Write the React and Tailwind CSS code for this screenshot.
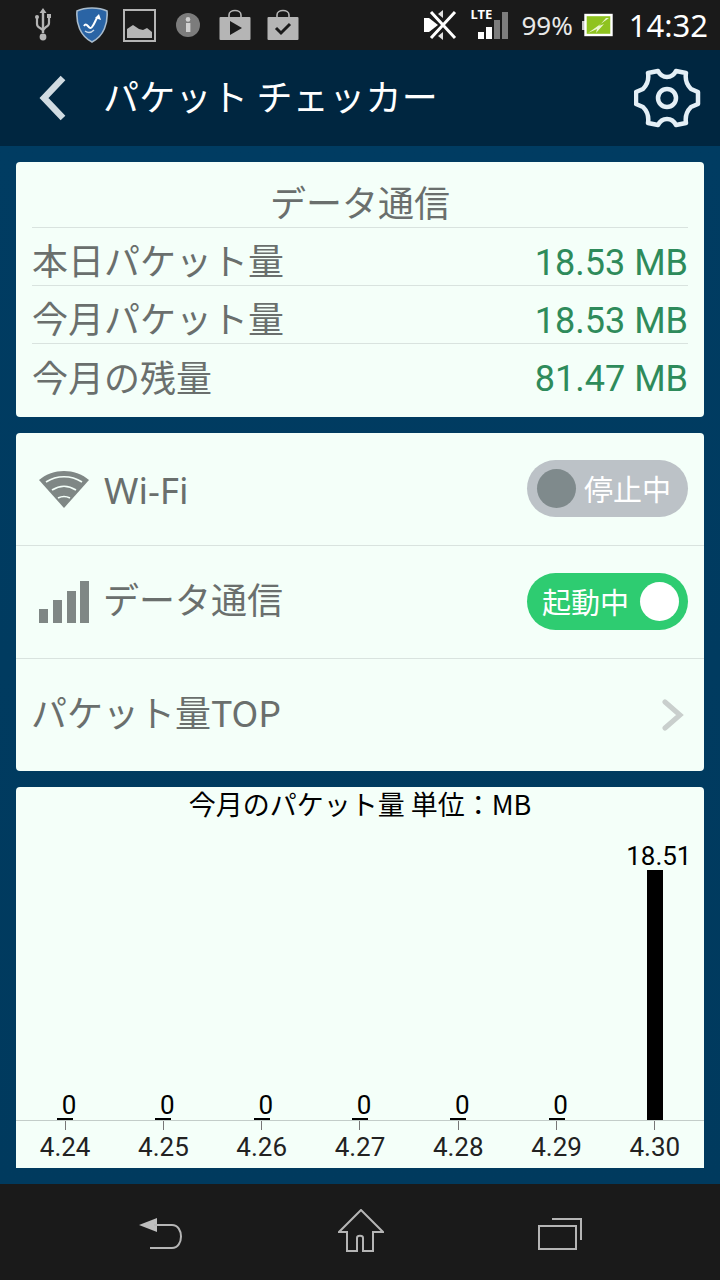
import React from "react";

const jp = { fontFamily: '"Noto Sans CJK JP", sans-serif' };
const noto = { fontFamily: '"Noto Sans", sans-serif' };
const roboto = { fontFamily: '"Roboto", sans-serif' };

function Usb() {
  return (
    <svg width="18" height="36" viewBox="0 0 18 36" fill="none" className="text-[#b5b5b5]">
      <path d="M9 1l3.500 5h-2.300v20h-2.400V6H5.500z" fill="currentColor" />
      <path d="M3 10v7c0 2 1 3 3 4l3 2 3-3c2-1 3-2 3-4v-6" stroke="currentColor" strokeWidth="2.200" />
      <rect x="1" y="8" width="4" height="4" rx="2" fill="currentColor" />
      <rect x="13" y="7" width="4" height="4" fill="currentColor" />
      <circle cx="9" cy="30" r="3.400" fill="currentColor" />
    </svg>
  );
}

function Shield() {
  return (
    <svg width="32" height="36" viewBox="0 0 32 36">
      <path d="M16 1c5 0 11 1 15 3 1 12-3 25-15 31C4 29 0 16 1 4c4-2 10-3 15-3z" fill="#2a64a5" stroke="#a9bccd" strokeWidth="1.600" />
      <path d="M8 19c3-5 5 5 8 1s3-6 5-9" fill="none" stroke="#fff" strokeWidth="2" />
      <path d="M19 11l4-4 2 6z" fill="#fff" />
      <path d="M9 24c4 3 7 1 9-1" fill="none" stroke="#c9d9e8" strokeWidth="1.400" />
    </svg>
  );
}

function Picture() {
  return (
    <svg width="33" height="33" viewBox="0 0 33 33">
      <rect x="1" y="1" width="31" height="31" fill="none" stroke="#b5b5b5" strokeWidth="2" />
      <path d="M4 29v-9l6-4 6 4 4 1 4-2 5 4v6z" fill="#b5b5b5" />
    </svg>
  );
}

function Info() {
  return (
    <svg width="24" height="24" viewBox="0 0 24 24">
      <circle cx="12" cy="12" r="12" fill="#7c7c7c" />
      <rect x="10" y="10" width="4.400" height="9" fill="#d0d0d0" />
      <circle cx="12" cy="6.400" r="2.300" fill="#d0d0d0" />
    </svg>
  );
}

function Bag({ kind }) {
  return (
    <svg width="32" height="32" viewBox="0 0 32 32">
      <path d="M10 8V6c0-6 12-6 12 0v2" fill="none" stroke="#b5b5b5" strokeWidth="1.600" />
      <rect x="0.500" y="8" width="31" height="23" rx="1" fill="#b5b5b5" />
      {kind === "play" ? (
        <path d="M11 12l12 7-12 7z" fill="#1a1a1a" />
      ) : (
        <path d="M9 19l5 5 9-9" fill="none" stroke="#1a1a1a" strokeWidth="3" />
      )}
    </svg>
  );
}

function Bluetooth() {
  return (
    <svg width="34" height="32" viewBox="0 0 34 32">
      <path d="M1 9h5l9 7-9 7H1z" fill="#fff" />
      <path d="M20 1v8l-5-4zM20 23v8l-5-4z" fill="#e0e0e0" />
      <path d="M8 3l24 26M32 3L8 29" stroke="#fff" strokeWidth="3" fill="none" />
    </svg>
  );
}

function Signal() {
  return (
    <div className="relative w-[39px] h-[40px]">
      <svg width="39" height="40" viewBox="0 0 39 40" className="absolute inset-0">
        <rect x="8" y="27" width="6" height="7" fill="#fff" />
        <rect x="16" y="22" width="6" height="12" fill="#fff" />
        <rect x="24" y="15" width="6" height="19" fill="#7d7d7d" />
        <rect x="32" y="7" width="6" height="27" fill="#7d7d7d" />
      </svg>
      <span className="absolute left-0 top-[2px] text-[13px] leading-[14px] font-bold text-white" style={noto}>
        LTE
      </span>
    </div>
  );
}

function Battery() {
  return (
    <svg width="31" height="24" viewBox="0 0 31 24">
      <rect x="0" y="8" width="3" height="9" fill="#c4c4c4" />
      <rect x="3.500" y="2" width="26" height="20" fill="#8fc31f" stroke="#fff" strokeWidth="2.400" />
      <path d="M27 5L6 20l9-4-1 4 8-9-5 2 7-8z" fill="#e9f5cf" />
    </svg>
  );
}

function Gear() {
  return (
    <svg width="68" height="64" viewBox="0 0 68 64" fill="none" stroke="#e4eff6" strokeWidth="4.500" strokeLinejoin="round">
      <path d="M33 11C38 11 40 9 42 5L52 7C51 13 53 19 57 23L64 26V38L57 41C53 45 51 51 52 57L42 59C40 55 38 53 33 53C28 53 26 55 24 59L14 57C15 51 13 45 9 41L2 38V26L9 23C13 19 15 13 14 7L24 5C26 9 28 11 33 11Z" />
      <circle cx="33" cy="32" r="9" />
    </svg>
  );
}

function Wifi() {
  return (
    <svg width="50" height="40" viewBox="0 0 50 40" fill="none">
      <path d="M25 39L0 11C14 -1 36 -1 50 11z" fill="#7f8785" />
      <path d="M7 13c11-7 25-7 36 0M13 21c8-5 16-5 24 0M19 29c4-2 8-2 12 0" stroke="#f4fff9" strokeWidth="1.700" />
    </svg>
  );
}

function Bars() {
  return (
    <svg width="50" height="44" viewBox="0 0 50 44" fill="#7f8785">
      <rect x="0" y="29" width="9" height="14" />
      <rect x="14" y="20" width="9" height="23" />
      <rect x="28" y="11" width="9" height="32" />
      <rect x="41" y="1" width="9" height="42" />
    </svg>
  );
}

function StatRow({ label, value, border = true }) {
  return (
    <div className={`h-[58px] flex items-center justify-between pt-[12px] ${border ? "border-b border-[#d9e3df]" : ""}`}>
      <span className="pb-[7px] text-[36px] leading-none text-[#6a6f6d]" style={jp}>{label}</span>
      <span className="text-[36px] leading-none text-[#2e8b5b]" style={roboto}>{value}</span>
    </div>
  );
}

const days = [
  { d: "4.24", v: "0", h: 2, big: false },
  { d: "4.25", v: "0", h: 2, big: false },
  { d: "4.26", v: "0", h: 2, big: false },
  { d: "4.27", v: "0", h: 2, big: false },
  { d: "4.28", v: "0", h: 2, big: false },
  { d: "4.29", v: "0", h: 2, big: false },
  { d: "4.30", v: "18.51", h: 250, big: true },
];

export default function App() {
  return (
    <div className="w-[720px] h-[1280px] flex flex-col overflow-hidden bg-[#003a5f]">
      <div className="h-[50px] shrink-0 bg-[#1a1a1a] flex items-center pl-[34px] pr-[12px]">
        <Usb />
        <div className="ml-[24px]"><Shield /></div>
        <div className="ml-[15px]"><Picture /></div>
        <div className="ml-[20px]"><Info /></div>
        <div className="ml-[19px]"><Bag kind="play" /></div>
        <div className="ml-[16px]"><Bag kind="check" /></div>
        <div className="ml-auto flex items-center">
          <Bluetooth />
          <div className="ml-[13px]"><Signal /></div>
          <span className="ml-[12px] text-[26px] leading-none text-[#e8e8e8]" style={noto}>99%</span>
          <div className="ml-[9px]"><Battery /></div>
          <span className="ml-[16px] text-[31px] leading-none text-white" style={noto}>14:32</span>
        </div>
      </div>

      <div className="h-[96px] shrink-0 bg-[#002640] flex items-center pl-[38px] pr-[18px]">
        <svg width="30" height="48" viewBox="0 0 30 48" fill="none">
          <path d="M25 4L6 24l19 20" stroke="#d0dbe2" strokeWidth="6.500" />
        </svg>
        <span className="ml-[35px] pb-[6px] text-[36px] leading-none tracking-[0.3px] text-white" style={jp}>パケット チェッカー</span>
        <div className="ml-auto"><Gear /></div>
      </div>

      <div className="flex-1 flex flex-col gap-4 p-4 bg-gradient-to-b from-[#003c62] to-[#003a5e]">
        <div className="h-[255px] bg-[#f4fff9] rounded-[4px] px-[16px]">
          <div className="h-[66px] pt-[12px] flex items-center justify-center border-b border-[#d9e3df]">
            <span className="text-[36px] leading-none text-[#6a6f6d]" style={jp}>データ通信</span>
          </div>
          <StatRow label="本日パケット量" value="18.53 MB" />
          <StatRow label="今月パケット量" value="18.53 MB" />
          <StatRow label="今月の残量" value="81.47 MB" border={false} />
        </div>

        <div className="h-[338px] bg-[#f4fff9] rounded-[4px] flex flex-col">
          <div className="h-[113px] flex items-center pl-[23px] pr-[16px] border-b border-[#d9e3df]">
            <Wifi />
            <span className="ml-[15px] text-[37px] leading-none text-[#6a6f6d]" style={noto}>Wi-Fi</span>
            <div className="ml-auto -mt-[2px] w-[161px] h-[57px] rounded-full bg-[#bcc2c7] flex items-center pl-[10px]">
              <span className="w-[39px] h-[39px] rounded-full bg-[#7f8a8c]" />
              <span className="ml-[8px] text-[29px] leading-none text-white" style={jp}>停止中</span>
            </div>
          </div>
          <div className="h-[113px] flex items-center pl-[23px] pr-[16px] border-b border-[#d9e3df]">
            <Bars />
            <span className="ml-[14px] pb-[8px] text-[36px] leading-none text-[#6a6f6d]" style={jp}>データ通信</span>
            <div className="ml-auto -mt-[2px] w-[161px] h-[57px] rounded-full bg-[#2ecc71] flex items-center pl-[15px]">
              <span className="text-[29px] leading-none text-white" style={jp}>起動中</span>
              <span className="ml-[11px] w-[39px] h-[39px] rounded-full bg-white" />
            </div>
          </div>
          <div className="flex-1 flex items-center pl-[15px] pr-[20px]">
            <span className="pb-[8px] text-[36px] leading-none text-[#6a6f6d]" style={jp}>パケット量TOP</span>
            <svg className="ml-auto" width="22" height="32" viewBox="0 0 22 32" fill="none">
              <path d="M3 3l15 13L3 29" stroke="#c9cfcd" strokeWidth="5" strokeLinecap="round" />
            </svg>
          </div>
        </div>

        <div className="flex-1 bg-[#f4fff9] rounded-t-[4px] flex flex-col">
          <div className="h-[36px] pb-[4px] flex items-center justify-center text-[27px] leading-none text-black whitespace-pre" style={jp}>
            今月のパケット量 単位：MB
          </div>
          <div className="flex-1 flex">
            {days.map((x) => (
              <div key={x.d} className="flex-1 flex flex-col items-center justify-end">
                <span className={`ml-[8px] text-[26px] leading-[30px] text-black ${x.big ? "-mb-[1px]" : "-mb-[2px]"}`} style={roboto}>{x.v}</span>
                <div className="w-[16px] bg-black" style={{ height: x.h }} />
              </div>
            ))}
          </div>
          <div className="h-[48px] flex border-t border-[#c3cdc9]">
            {days.map((x) => (
              <div key={x.d} className="flex-1 flex flex-col items-center">
                <span className="w-px h-[9px] bg-[#777]" />
                <span className="text-[26px] leading-[34px] text-[#222]" style={roboto}>{x.d}</span>
              </div>
            ))}
          </div>
        </div>
      </div>

      <div className="h-[96px] shrink-0 bg-[#1a1a1a] flex items-center pl-[138px] gap-[154px]">
        <svg className="mt-[4px]" width="46" height="34" viewBox="0 0 46 34" fill="none">
          <path d="M1 8l18-7v14z" fill="#bdbdbd" />
          <path d="M16 8h18c12 0 12 23 0 23H12" stroke="#b5b5b5" strokeWidth="2" />
        </svg>
        <svg className="-mt-[3px]" width="46" height="44" viewBox="0 0 46 44" fill="none">
          <path d="M23 1L1 23h8v19h10V29c0-3 6-3 6 0v13h10V23h10z" stroke="#b5b5b5" strokeWidth="2" />
        </svg>
        <svg className="mt-[4px]" width="46" height="32" viewBox="0 0 46 32" fill="none">
          <rect x="1" y="8" width="37" height="23" stroke="#b5b5b5" strokeWidth="2" />
          <path d="M14 1h29v21" stroke="#b5b5b5" strokeWidth="2" />
        </svg>
      </div>
    </div>
  );
}
